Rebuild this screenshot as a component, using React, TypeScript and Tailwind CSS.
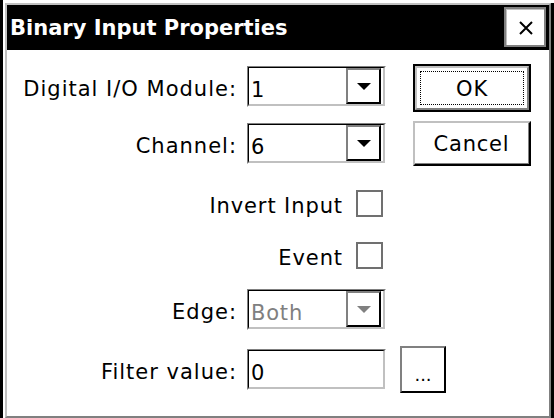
const font = { fontFamily: '"DejaVu Sans", Verdana, sans-serif' };

function Combo({ value, disabled }: { value: string; disabled?: boolean }) {
  return (
    <div className="shrink-0 w-[139px] h-[41px] border-t border-l border-t-[#808080] border-l-[#808080] border-b border-r border-b-white border-r-white">
      <div className="h-full flex border-t border-l border-t-black border-l-black border-b-2 border-r-2 border-b-[#c0c0c0] border-r-[#c0c0c0]">
        <div
          className={`flex-1 pl-[2px] pt-[10px] text-[21px] leading-[25px] tracking-[0.8px] ${
            disabled ? "text-[#808080]" : "text-black"
          }`}
        >
          {value}
        </div>
        <div className="w-[35px] h-full mr-[2px] border-t-2 border-l-2 border-t-[#808080] border-l-[#808080] border-b-2 border-r-2 border-b-black border-r-black flex items-center justify-center bg-white">
          <svg width="14" height="7" viewBox="0 0 14 7">
            <polygon points="0,0 14,0 7,7" fill={disabled ? "#808080" : "#000"} />
          </svg>
        </div>
      </div>
    </div>
  );
}

function Label({ children }: { children: React.ReactNode }) {
  return (
    <div className="shrink-0 w-[230px] text-right pt-[11px] text-[21px] leading-[25px] tracking-[1px] text-black">
      {children}
    </div>
  );
}

function Check({ label }: { label: string }) {
  return (
    <div className="flex justify-end items-center pr-[3px] h-[27px]">
      <span className="text-[21px] leading-[25px] tracking-[0.9px] text-black mr-[13px] pt-[5px]">
        {label}
      </span>
      <div className="w-[27px] h-[27px] border-2 border-[#707070] bg-white" />
    </div>
  );
}

export default function App() {
  return (
    <div className="w-[554px] h-[418px] bg-white overflow-hidden flex" style={font}>
      <div className="w-[3px] h-full bg-black" />
      <div className="ml-[2px] mt-[3px] w-[549px] h-[417px] shrink-0 border-r-[3px] border-b-2 border-black">
        <div className="h-full flex flex-col border-l-2 border-t-2 border-l-[#c0c0c0] border-t-[#c0c0c0] border-r-2 border-b-2 border-r-[#808080] border-b-[#808080]">
          {/* Title bar */}
          <div className="h-[45px] bg-black flex items-start justify-between pl-[3px] pr-[3px]">
            <div className="text-white font-bold text-[21px] leading-[25px] pt-[11px]">
              Binary Input Properties
            </div>
            <div className="mt-[2px] w-[42px] h-[40px] border-2 border-[#808080] bg-white">
              <div className="w-full h-full border-t border-l border-[#c0c0c0] flex items-center justify-center">
                <svg width="16" height="16" viewBox="0 0 16 16">
                  <path d="M2 2 L14 14 M14 2 L2 14" stroke="#000" strokeWidth="2" />
                </svg>
              </div>
            </div>
          </div>

          {/* Body */}
          <div className="flex">
            <div className="w-[379px] shrink-0 flex flex-col">
              <div className="flex mt-[16px]">
                <Label>Digital I/O Module:</Label>
                <div className="ml-[10px]">
                  <Combo value="1" />
                </div>
              </div>
              <div className="flex mt-[16px]">
                <Label>Channel:</Label>
                <div className="ml-[10px]">
                  <Combo value="6" />
                </div>
              </div>
              <div className="mt-[26px]">
                <Check label="Invert Input" />
              </div>
              <div className="mt-[25px]">
                <Check label="Event" />
              </div>
              <div className="flex mt-[20px]">
                <Label>Edge:</Label>
                <div className="ml-[10px]">
                  <Combo value="Both" disabled />
                </div>
              </div>
              <div className="flex items-start mt-[19px]">
                <Label>Filter value:</Label>
                <div className="shrink-0 ml-[10px] w-[139px] h-[41px] border-t border-l border-t-[#808080] border-l-[#808080] border-b border-r border-b-white border-r-white">
                  <div className="h-full border-t border-l border-t-black border-l-black border-b-2 border-r-2 border-b-[#c0c0c0] border-r-[#c0c0c0] pl-[2px] pt-[10px] text-[21px] leading-[25px] text-black">
                    0
                  </div>
                </div>
                <div className="shrink-0 -mt-[3px] ml-[14px] w-[46px] h-[47px] border-t-2 border-l-2 border-t-[#808080] border-l-[#808080] border-b-2 border-r-2 border-b-black border-r-black bg-white flex items-end justify-center pb-[6px] text-[18px] leading-[20px] text-black">
                  ...
                </div>
              </div>
            </div>

            {/* Buttons */}
            <div className="ml-[27px] flex flex-col">
              <div className="mt-[14px] w-[118px] h-[48px] border-2 border-black">
                <div className="h-full border-2 border-t-[#c0c0c0] border-l-[#c0c0c0] border-b-[#808080] border-r-[#808080] p-[3px]">
                  <div className="h-full pt-[2px] border border-dotted border-black flex items-center justify-center text-[21px] leading-[25px] tracking-[0.8px] text-black">
                    OK
                  </div>
                </div>
              </div>
              <div className="mt-[9px] w-[118px] h-[45px] border-t-2 border-l-2 border-t-[#c0c0c0] border-l-[#c0c0c0] border-b-2 border-r-2 border-b-black border-r-black">
                <div className="h-full pt-[3px] border-b border-r border-b-[#808080] border-r-[#808080] flex items-center justify-center text-[21px] leading-[25px] tracking-[0.8px] text-black">
                  Cancel
                </div>
              </div>
            </div>
          </div>
        </div>
      </div>
    </div>
  );
}
